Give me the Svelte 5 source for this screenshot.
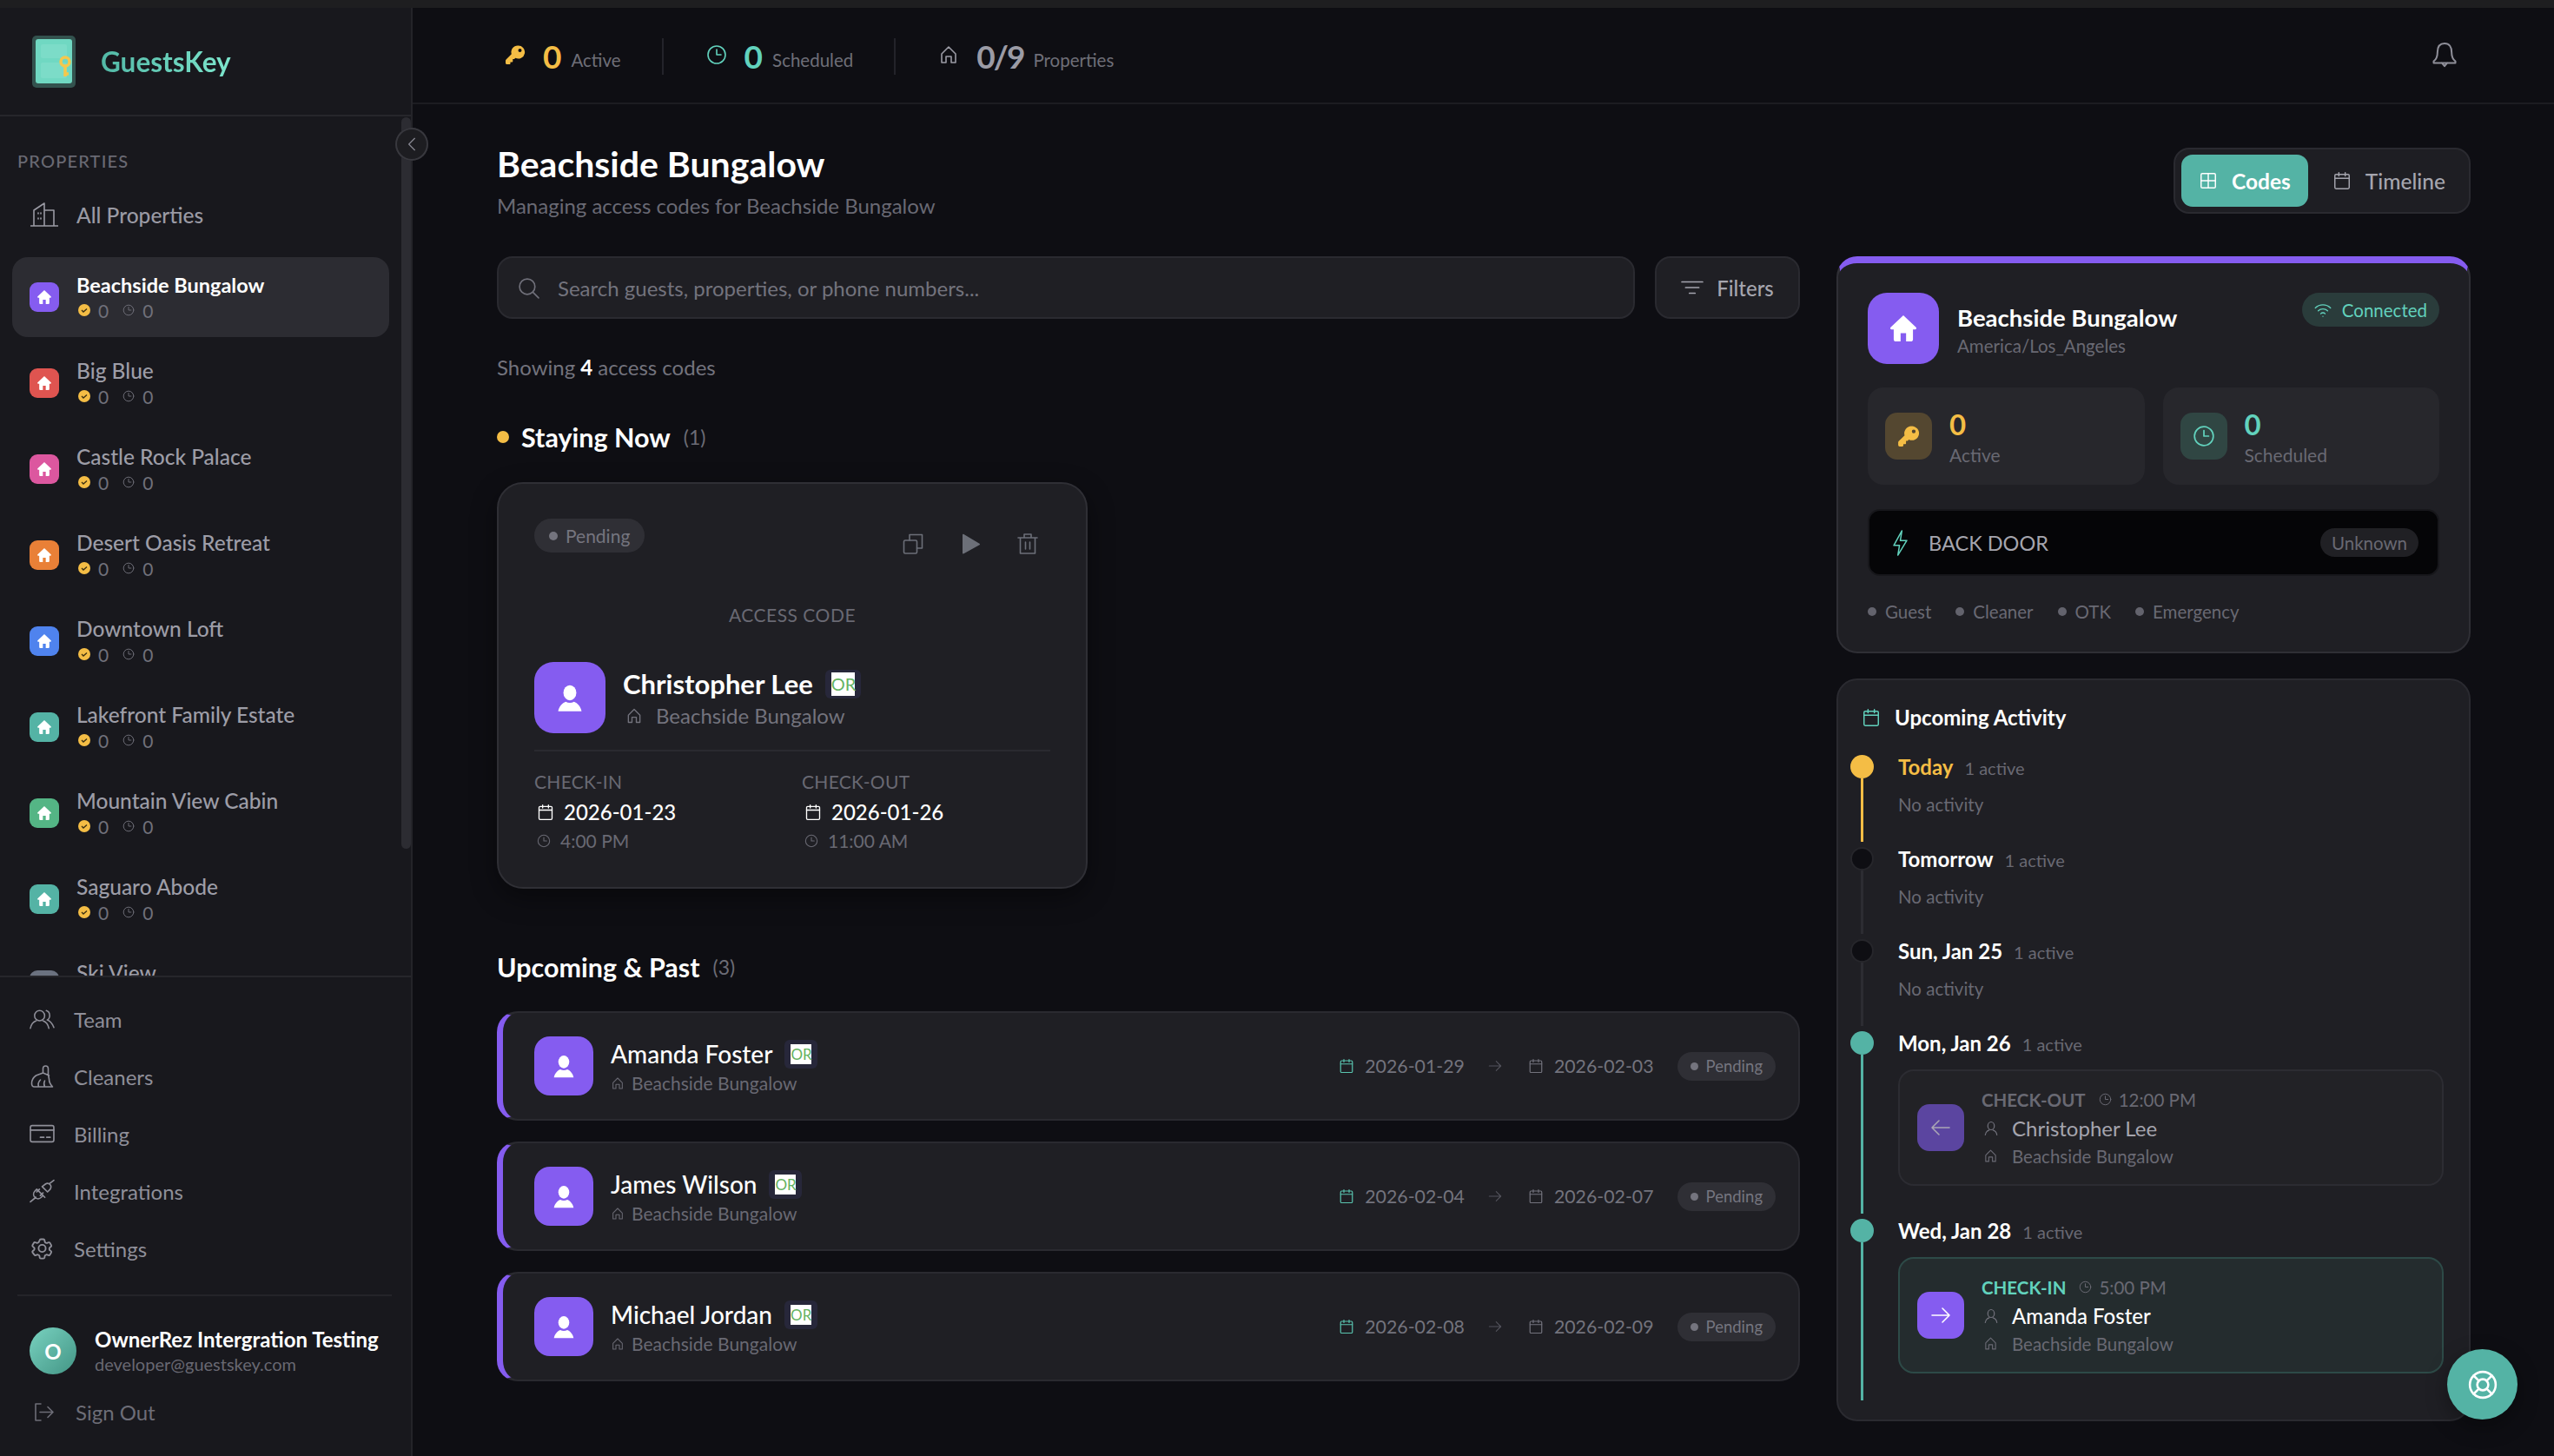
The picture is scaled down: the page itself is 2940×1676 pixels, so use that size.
<script>
  const properties = [
    { name: "Beachside Bungalow", color: "#855cf0", active: true },
    { name: "Big Blue", color: "#df5450" },
    { name: "Castle Rock Palace", color: "#dc579f" },
    { name: "Desert Oasis Retreat", color: "#e98037" },
    { name: "Downtown Loft", color: "#4f83ee" },
    { name: "Lakefront Family Estate", color: "#54b3a5" },
    { name: "Mountain View Cabin", color: "#54b585" },
    { name: "Saguaro Abode", color: "#54b3a5" },
    { name: "Ski View", color: "#6b7280" }
  ];

  const upcoming = [
    { name: "Amanda Foster", from: "2026-01-29", to: "2026-02-03" },
    { name: "James Wilson", from: "2026-02-04", to: "2026-02-07" },
    { name: "Michael Jordan", from: "2026-02-08", to: "2026-02-09" }
  ];

  const emptyDays = [
    { label: "Today", kind: "today" },
    { label: "Tomorrow", kind: "idle" },
    { label: "Sun, Jan 25", kind: "idle" }
  ];

  const legend = ["Guest", "Cleaner", "OTK", "Emergency"];
</script>

{#snippet house()}
  <svg viewBox="0 0 24 24" class="line"><path d="M4 11l8-8 8 8v10h-5v-7H9v7H4z" /></svg>
{/snippet}
{#snippet houseFill()}
  <svg viewBox="0 0 24 24" class="solid"><path d="M12 2.500 2.800 11.200c-.6.600-.2 1.600.6 1.600H5v7.200c0 .8.700 1.500 1.500 1.500H10v-6h4v6h3.500c.8 0 1.500-.7 1.500-1.500v-7.200h1.600c.8 0 1.200-1 .6-1.600z" /></svg>
{/snippet}
{#snippet clock()}
  <svg viewBox="0 0 24 24" class="line"><circle cx="12" cy="12" r="10" /><path d="M12 6v6h5" /></svg>
{/snippet}
{#snippet calendar()}
  <svg viewBox="0 0 24 24" class="line"><rect x="3" y="4" width="18" height="18" rx="1.500" /><path d="M3 9h18M8 2v4M16 2v4" /></svg>
{/snippet}
{#snippet key()}
  <svg viewBox="0 0 24 24" class="solid"><path d="M15 1.500a7.500 7.500 0 0 0-7.200 9.700L1.600 17.400c-.4.400-.6.900-.6 1.400v2.700c0 .8.700 1.500 1.500 1.500h3c.6 0 1-.4 1-1v-1.500h1.800c.6 0 1-.4 1-1V17h1.700l1.300-1.300A7.500 7.500 0 1 0 15 1.500zm2.500 7.500a2 2 0 1 1 0-4 2 2 0 0 1 0 4z" /></svg>
{/snippet}
{#snippet person()}
  <svg viewBox="0 0 24 24" class="solid"><ellipse cx="12" cy="8.500" rx="4.700" ry="5.500" /><path d="M3.500 22c.6-3.500 3-6 5.500-7 1.800 1 4.200 1 6 0 2.500 1 4.900 3.500 5.500 7z" /></svg>
{/snippet}
{#snippet personLine()}
  <svg viewBox="0 0 24 24" class="line"><ellipse cx="12" cy="8" rx="5" ry="6" /><path d="M3 22c.6-4 3-6.500 6-7.500M21 22c-.6-4-3-6.500-6-7.500" /></svg>
{/snippet}
{#snippet orBadge()}
  <span class="or-wrap"><span class="or">OR</span></span>
{/snippet}
{#snippet pending()}
  <span class="pill"><i></i>Pending</span>
{/snippet}

<div class="strip"></div>
<div class="shell">
  <aside class="sidebar">
    <div class="brand">
      <svg class="logo" viewBox="0 0 50 60">
        <rect width="50" height="60" rx="5" fill="#33524e" />
        <rect x="4" y="4" width="42" height="51" rx="3" fill="#70d8c2" />
        <rect x="10" y="10" width="30" height="16" rx="2" fill="#7cdcc8" />
        <rect x="10" y="31" width="30" height="18" rx="2" fill="#7cdcc8" />
        <circle cx="38" cy="30" r="5" fill="none" stroke="#f5c84c" stroke-width="3.500" />
        <path d="M38 35v12M38 44h4" stroke="#f5c84c" stroke-width="3.500" fill="none" />
      </svg>
      <span class="brand-name">GuestsKey</span>
    </div>

    <div class="list">
      <div class="section-label">PROPERTIES</div>
      <div class="all-row">
        <svg viewBox="0 0 32 28" class="line all-icon"><path d="M0 27h32M4 27V9l12-8v26M16 9h11v18M9 12v1M12 12v1M9 18v1M12 18v1" /></svg>
        All Properties
      </div>
      {#each properties as p}
        <div class="prop" class:selected={p.active}>
          <span class="prop-icon" style="background: {p.color};">{@render houseFill()}</span>
          <div class="prop-text">
            <div class="prop-name">{p.name}</div>
            <div class="prop-stats">
              <svg viewBox="0 0 14 14" class="check"><circle cx="7" cy="7" r="7" fill="#f4bd45" /><path d="M4 7l2 2 4-3.500" fill="none" stroke="#3a2f12" stroke-width="1.300" /></svg>
              <span class="stat-num">0</span>
              <span class="mini-clock">{@render clock()}</span>
              <span class="stat-num">0</span>
            </div>
          </div>
        </div>
      {/each}
      <div class="scroll-thumb"></div>
    </div>

    <nav class="nav">
      <div class="nav-row">
        <svg viewBox="0 0 30 24" class="line"><circle cx="12" cy="8" r="6" /><path d="M1 23c1-5 4-8 7-9M23 23c-1-5-4-8-7-9M20 2c3 1 4 3 4 6s-2 5-3 5c3 1 6 4 8 9" /></svg>
        Team
      </div>
      <div class="nav-row">
        <svg viewBox="0 0 28 28" class="line"><path d="M18 2c-2 0-3 1-3 3v5L7 13c-3 2-5 5-5 9 0 3 1 4 3 4h21c-2-2-4-6-4-9l-1-5V5c0-2-1-3-3-3zM15 10l7 3M10 26c-1-3 0-6 2-8M17 26c-1-2-1-5 0-7" /></svg>
        Cleaners
      </div>
      <div class="nav-row">
        <svg viewBox="0 0 28 20" class="line"><rect x="1" y="1" width="26" height="18" rx="2" /><path d="M1 6h26M12 14h4M19 14h4" /></svg>
        Billing
      </div>
      <div class="nav-row">
        <svg viewBox="0 0 28 26" class="line"><path d="M1 25l6-5M27 1l-5 4M8 11l9 9M6 13c-2 2-2 5 0 7s5 2 7 0l2-2-7-7zM14 8l6 6 3-3c1-2 1-4 0-5s-3-2-5-1zM11 11l-3 3M15 15l-3 3" /></svg>
        Integrations
      </div>
      <div class="nav-row">
        <svg viewBox="0 0 24 24" class="line"><path d="M9.600 3.900c.1-.5.600-.9 1.100-.9h2.600c.5 0 1 .4 1.100.9l.2 1.500c.1.400.4.700.7.900l.5.300c.3.200.8.200 1.100.1l1.400-.5c.5-.2 1.100 0 1.400.5l1.300 2.200c.3.500.1 1-.3 1.400l-1.100.9c-.3.200-.5.600-.5 1v.6c0 .4.200.8.500 1l1.100.9c.4.400.6.900.3 1.400l-1.300 2.200c-.3.500-.9.700-1.400.5l-1.400-.5c-.3-.1-.8-.1-1.100.1l-.5.300c-.3.200-.6.500-.7.900l-.2 1.500c-.1.500-.6.900-1.100.9h-2.600c-.5 0-1-.4-1.100-.9l-.2-1.500c-.1-.4-.4-.7-.7-.9l-.5-.3c-.3-.2-.8-.2-1.100-.1l-1.400.5c-.5.200-1.100 0-1.400-.5L2.500 16c-.3-.5-.1-1 .3-1.400l1.100-.9c.3-.2.500-.6.500-1v-.6c0-.4-.2-.8-.5-1l-1.100-.9c-.4-.4-.6-.9-.3-1.400l1.300-2.200c.3-.5.900-.7 1.400-.5l1.400.5c.3.100.8.100 1.100-.1l.5-.3c.3-.2.600-.5.700-.9z" /><circle cx="12" cy="12" r="3.500" /></svg>
        Settings
      </div>
    </nav>

    <div class="account">
      <div class="user">
        <span class="user-avatar">O</span>
        <div>
          <div class="user-name">OwnerRez Intergration Testing</div>
          <div class="user-mail">developer@guestskey.com</div>
        </div>
      </div>
      <div class="nav-row signout">
        <svg viewBox="0 0 24 24" class="line"><path d="M9 3H3v19h6M8 12.500h15M17 6.500l6 6-6 6" /></svg>
        Sign Out
      </div>
    </div>

    <button class="collapse" aria-label="Collapse">
      <svg viewBox="0 0 24 24" class="line"><path d="M16 4l-8 8 8 8" /></svg>
    </button>
  </aside>

  <div class="main">
    <header class="topbar">
      <div class="top-stat first">
        <span class="top-icon amber">{@render key()}</span>
        <b class="amber">0</b><span>Active</span>
      </div>
      <div class="top-stat">
        <span class="top-icon teal">{@render clock()}</span>
        <b class="teal">0</b><span>Scheduled</span>
      </div>
      <div class="top-stat last">
        <span class="top-icon grey">{@render house()}</span>
        <b class="grey">0/9</b><span>Properties</span>
      </div>
      <svg viewBox="0 0 24 24" class="line bell"><path d="M12 1.500c-4.500 0-6.500 3.500-6.500 8 0 5-1.500 7-3.500 8.500v1.500h20V18c-2-1.500-3.500-3.500-3.500-8.500 0-4.500-2-8-6.500-8zM9.500 19.500l2.500 3 2.500-3" /></svg>
    </header>

    <div class="body">
      <div class="page-head">
        <div>
          <h1>Beachside Bungalow</h1>
          <p>Managing access codes for Beachside Bungalow</p>
        </div>
        <div class="segment">
          <span class="seg on">
            <svg viewBox="0 0 24 24" class="line"><rect x="3" y="3" width="18" height="18" rx="1.500" /><path d="M12 3v18M3 12h18" /></svg>
            Codes
          </span>
          <span class="seg">{@render calendar()}Timeline</span>
        </div>
      </div>

      <div class="columns">
        <section class="left">
          <div class="search-row">
            <div class="search">
              <svg viewBox="0 0 24 24" class="line"><circle cx="10.500" cy="10.500" r="8.500" /><path d="M17 17l6 6" /></svg>
              Search guests, properties, or phone numbers...
            </div>
            <div class="filters">
              <svg viewBox="0 0 24 24" class="line"><path d="M1 6h22M5 12h14M9 18h6" /></svg>
              Filters
            </div>
          </div>

          <div class="showing">Showing <b>4</b> access codes</div>

          <div class="group-title staying"><i></i><h2>Staying Now</h2><span>(1)</span></div>

          <article class="stay-card">
            <div class="stay-top">
              {@render pending()}
              <div class="actions">
                <svg viewBox="0 0 24 24" class="line"><rect x="1.500" y="8" width="15" height="15" rx="1.500" /><path d="M8 8V1.500h14.500V17H16.500" /></svg>
                <svg viewBox="0 0 24 24" class="solid"><path d="M3 1.500v21c0 .8.800 1.200 1.500.8l18-10c.7-.4.7-1.200 0-1.600l-18-10.800C3.800.5 3 .8 3 1.500z" /></svg>
                <svg viewBox="0 0 24 24" class="line"><path d="M1 5h22M8 5V1h8v4M3.500 5v18h17V5M9.500 10v8M14.500 10v8" /></svg>
              </div>
            </div>
            <div class="access-label">ACCESS CODE</div>
            <div class="guest-big">
              <span class="avatar big">{@render person()}</span>
              <div>
                <div class="guest-name-big">Christopher Lee {@render orBadge()}</div>
                <div class="guest-prop-big">{@render house()}Beachside Bungalow</div>
              </div>
            </div>
            <div class="stay-dates">
              <div>
                <div class="date-label">CHECK-IN</div>
                <div class="date-val">{@render calendar()}2026-01-23</div>
                <div class="date-time">{@render clock()}4:00 PM</div>
              </div>
              <div>
                <div class="date-label">CHECK-OUT</div>
                <div class="date-val">{@render calendar()}2026-01-26</div>
                <div class="date-time">{@render clock()}11:00 AM</div>
              </div>
            </div>
          </article>

          <div class="group-title past"><h2>Upcoming &amp; Past</h2><span>(3)</span></div>

          <div class="rows">
            {#each upcoming as g}
              <article class="row">
                <span class="avatar">{@render person()}</span>
                <div class="row-main">
                  <div class="row-name">{g.name} {@render orBadge()}</div>
                  <div class="row-prop">{@render house()}Beachside Bungalow</div>
                </div>
                <div class="row-dates">
                  <span class="row-date in">{@render calendar()}<em>{g.from}</em></span>
                  <svg viewBox="0 0 24 24" class="line arrow"><path d="M2 12h20M14 4l8 8-8 8" /></svg>
                  <span class="row-date">{@render calendar()}<em>{g.to}</em></span>
                </div>
                {@render pending()}
              </article>
            {/each}
          </div>
        </section>

        <section class="right">
          <article class="prop-card">
            <div class="prop-head">
              <span class="avatar big home">{@render houseFill()}</span>
              <div class="prop-head-text">
                <div class="prop-title">Beachside Bungalow</div>
                <div class="prop-tz">America/Los_Angeles</div>
              </div>
              <span class="connected">
                <svg viewBox="0 0 24 24" class="line"><path d="M1.500 9a15 15 0 0 1 21 0M5.500 13a9.500 9.500 0 0 1 13 0M9 17a4 4 0 0 1 6 0M12 20.500v.1" /></svg>
                Connected
              </span>
            </div>
            <div class="stat-boxes">
              <div class="stat-box">
                <span class="stat-icon amber-bg amber">{@render key()}</span>
                <div class="stat-copy"><div class="stat-big amber">0</div><div class="stat-label">Active</div></div>
              </div>
              <div class="stat-box">
                <span class="stat-icon teal-bg teal">{@render clock()}</span>
                <div class="stat-copy"><div class="stat-big teal">0</div><div class="stat-label">Scheduled</div></div>
              </div>
            </div>
            <div class="door">
              <svg viewBox="0 0 20 32" class="line bolt"><path d="M12 1 2 19h7l-2 12 11-18h-8z" /></svg>
              <span class="door-name">BACK DOOR</span>
              <span class="unknown">Unknown</span>
            </div>
            <div class="legend">
              {#each legend as item}
                <span class="legend-item"><i></i>{item}</span>
              {/each}
            </div>
          </article>

          <article class="activity">
            <div class="activity-title"><span class="teal">{@render calendar()}</span>Upcoming Activity</div>

            {#each emptyDays as day}
              <div class="day {day.kind}">
                <div class="rail"><i></i><u></u></div>
                <div class="day-body">
                  <div class="day-head"><b>{day.label}</b><span>1 active</span></div>
                  <div class="no-activity">No activity</div>
                </div>
              </div>
            {/each}

            <div class="day busy">
              <div class="rail"><i></i><u></u></div>
              <div class="day-body">
                <div class="day-head"><b>Mon, Jan 26</b><span>1 active</span></div>
                <div class="event">
                  <span class="event-icon dim">
                    <svg viewBox="0 0 24 24" class="line"><path d="M22 12H2M10 4l-8 8 8 8" /></svg>
                  </span>
                  <div>
                    <div class="event-top"><b>CHECK-OUT</b>{@render clock()}<span>12:00 PM</span></div>
                    <div class="event-guest dim-text">{@render personLine()}Christopher Lee</div>
                    <div class="event-prop">{@render house()}Beachside Bungalow</div>
                  </div>
                </div>
              </div>
            </div>

            <div class="day busy">
              <div class="rail"><i></i><u></u></div>
              <div class="day-body">
                <div class="day-head"><b>Wed, Jan 28</b><span>1 active</span></div>
                <div class="event current">
                  <span class="event-icon">
                    <svg viewBox="0 0 24 24" class="line"><path d="M2 12h20M14 4l8 8-8 8" /></svg>
                  </span>
                  <div>
                    <div class="event-top"><b>CHECK-IN</b>{@render clock()}<span>5:00 PM</span></div>
                    <div class="event-guest">{@render personLine()}Amanda Foster</div>
                    <div class="event-prop">{@render house()}Beachside Bungalow</div>
                  </div>
                </div>
              </div>
            </div>
          </article>
        </section>
      </div>
    </div>
  </div>
</div>

<button class="fab" aria-label="Help">
  <svg viewBox="0 0 24 24" class="line"><circle cx="12" cy="12" r="10.500" /><circle cx="12" cy="12" r="4.500" /><path d="M4.600 4.600l4.200 4.200M15.200 15.200l4.200 4.200M19.400 4.600l-4.200 4.200M8.800 15.200l-4.200 4.200" /></svg>
</button>

<style>
  :global(body) {
    margin: 0;
    background: #0e0e13;
    overflow: hidden;
    font-family: "Lato", "Noto Sans", sans-serif;
    color: #fff;
  }

  svg { display: block; flex: none; }
  .line { fill: none; stroke: currentColor; stroke-width: 1.6; stroke-linecap: round; stroke-linejoin: round; }
  .solid { fill: currentColor; }
  h1, h2, p { margin: 0; }
  button { border: 0; padding: 0; }

  .amber { color: #f4bd45; }
  .teal { color: #62d2bd; }
  .grey { color: #9b9ba5; }

  .strip { height: 9px; background: #1e1e20; }
  .shell { display: flex; height: 1667px; }

  /* Sidebar */
  .sidebar {
    position: relative;
    width: 475px;
    flex: none;
    display: flex;
    flex-direction: column;
    background: #18181d;
    border-right: 2px solid #242429;
    box-sizing: border-box;
  }
  .brand {
    height: 125px;
    flex: none;
    box-sizing: border-box;
    display: flex;
    align-items: center;
    padding-left: 37px;
    gap: 29px;
    border-bottom: 2px solid #26262b;
  }
  .logo { width: 50px; height: 60px; }
  .brand-name {
    font-size: 31.500px;
    font-weight: 700;
    background: linear-gradient(90deg, #52b8a6, #7de6cd);
    -webkit-background-clip: text;
    background-clip: text;
    color: transparent;
  }

  .list { position: relative; height: 989px; flex: none; overflow: hidden; }
  .scroll-thumb {
    position: absolute;
    right: 0;
    top: 1px;
    width: 11px;
    height: 842px;
    border-radius: 6px;
    background: #2c2c32;
  }
  .section-label {
    padding: 39px 0 0 20px;
    font-size: 20px;
    line-height: 24px;
    letter-spacing: 1.200px;
    font-weight: 500;
    color: #696973;
  }
  .all-row {
    display: flex;
    align-items: center;
    gap: 21px;
    height: 46px;
    margin: 27px 0 26px;
    padding-left: 35px;
    font-size: 24.500px;
    font-weight: 500;
    color: #9a9aa4;
  }
  .all-icon { width: 32px; height: 28px; }
  .prop {
    display: flex;
    align-items: center;
    gap: 20px;
    width: 414px;
    height: 92px;
    margin: 0 0 7px 14px;
    padding-left: 20px;
    border-radius: 18px;
  }
  .prop.selected { background: #2c2c32; }
  .prop-icon {
    display: flex;
    align-items: center;
    justify-content: center;
    width: 34px;
    height: 34px;
    border-radius: 9px;
    color: #fff;
  }
  .prop-icon svg { width: 20px; height: 20px; }
  .prop-name { font-size: 24.500px; line-height: 30px; font-weight: 500; color: #9d9da7; }
  .selected .prop-name { color: #fff; font-weight: 700; font-size: 23.500px; }
  .prop-stats { display: flex; align-items: center; height: 28px; color: #70707a; font-size: 21px; }
  .check { width: 14px; height: 14px; margin-left: 2px; }
  .stat-num { margin-left: 9px; }
  .mini-clock { margin-left: 16px; width: 14px; height: 14px; }
  .mini-clock svg { width: 14px; height: 14px; }

  .nav {
    flex: none;
    border-top: 2px solid #26262b;
    padding: 15px 0 20px;
  }
  .nav-row {
    display: flex;
    align-items: center;
    gap: 22px;
    height: 66px;
    padding-left: 34px;
    font-size: 24px;
    color: #8f8f99;
  }
  .nav-row svg { width: 29px; height: 28px; }
  .account { margin: 0 22px 0 20px; border-top: 2px solid #242429; }
  .user { display: flex; align-items: center; gap: 21px; padding: 35px 0 0 14px; }
  .user-avatar {
    display: flex;
    align-items: center;
    justify-content: center;
    width: 54px;
    height: 54px;
    border-radius: 50%;
    background: linear-gradient(135deg, #79d2c0, #439585);
    font-size: 24px;
    font-weight: 700;
  }
  .user-name { font-size: 24px; line-height: 30px; font-weight: 700; white-space: nowrap; }
  .user-mail { font-size: 20px; line-height: 26px; color: #686872; }
  .signout { margin-left: -20px; height: 60px; margin-top: 12px; color: #6d6d77; }
  .signout svg { width: 24px; height: 24px; margin-left: 4px; margin-right: 3px; }

  .collapse {
    position: absolute;
    left: 455px;
    top: 138px;
    width: 38px;
    height: 38px;
    display: flex;
    align-items: center;
    justify-content: center;
    border-radius: 50%;
    background: #1d1d21;
    box-shadow: inset 0 0 0 2px #38383e;
    color: #85858f;
  }
  .collapse svg { width: 20px; height: 20px; }

  /* Top bar */
  .main { flex: 1; min-width: 0; }
  .topbar {
    height: 111px;
    box-sizing: border-box;
    display: flex;
    align-items: center;
    border-bottom: 2px solid #1c1c21;
    padding: 2px 111px 0 0;
  }
  .top-stat {
    display: flex;
    align-items: center;
    height: 42px;
    padding: 0 47px 0 49px;
    border-right: 2px solid #23232a;
    font-size: 20.500px;
    color: #6e6e78;
  }
  .top-stat.first { padding: 0 47px 0 106px; }
  .top-stat.last { border: 0; }
  .top-stat b { font-size: 37px; font-weight: 700; margin-right: 11px; line-height: 42px; }
  .top-stat.last b { letter-spacing: -2px; }
  .top-stat span:last-child { padding-top: 8px; }
  .top-icon { width: 24px; height: 24px; margin-right: 20px; margin-top: -4px; }
  .top-icon svg { width: 24px; height: 24px; }
  .bell { margin-left: auto; width: 30px; height: 30px; color: #8f8f99; margin-top: -4px; }

  /* Main body */
  .body { padding: 50px 0 0 97px; width: 2369px; box-sizing: border-box; }
  .page-head { display: flex; justify-content: space-between; height: 125px; }
  h1 { font-size: 41px; line-height: 50px; font-weight: 700; margin-top: -6px; }
  .page-head p { font-size: 24px; line-height: 30px; color: #696973; margin-top: 8px; }
  .segment {
    display: flex;
    align-items: center;
    gap: 8px;
    height: 76px;
    padding: 0 7px;
    box-sizing: border-box;
    border: 2px solid #2a2a30;
    border-radius: 18px;
    background: #1e1e23;
  }
  .seg {
    display: flex;
    align-items: center;
    justify-content: center;
    gap: 16px;
    height: 60px;
    padding: 0 20px;
    border-radius: 13px;
    font-size: 24.500px;
    font-weight: 500;
    color: #a5a5ae;
  }
  .seg svg { width: 22px; height: 22px; }
  .seg.on { background: #54b3a5; color: #fff; font-weight: 700; }

  .columns { display: flex; gap: 42px; }
  .left { width: 1500px; flex: none; }
  .right { width: 730px; flex: none; display: flex; flex-direction: column; gap: 29px; }

  .search-row { display: flex; gap: 23px; }
  .search {
    flex: 1;
    display: flex;
    align-items: center;
    gap: 21px;
    height: 72px;
    box-sizing: border-box;
    padding-left: 22px;
    background: #1f1f24;
    border: 2px solid #2a2a30;
    border-radius: 18px;
    font-size: 24px;
    color: #73737d;
  }
  .search svg { width: 25px; height: 25px; color: #70707a; }
  .filters {
    display: flex;
    align-items: center;
    justify-content: center;
    gap: 15px;
    width: 167px;
    height: 72px;
    box-sizing: border-box;
    background: #1f1f24;
    border: 2px solid #2a2a30;
    border-radius: 18px;
    font-size: 24px;
    font-weight: 500;
    color: #a5a5ae;
  }
  .filters svg { width: 26px; height: 26px; }

  .showing { margin-top: 41px; font-size: 24px; line-height: 30px; color: #73737d; }
  .showing b { color: #fff; }

  .group-title { display: flex; align-items: center; }
  .group-title h2 { font-size: 30.500px; font-weight: 700; line-height: 40px; }
  .group-title span { font-size: 23px; color: #6c6c76; margin-left: 15px; }
  .staying { margin-top: 45px; }
  .staying i { width: 14px; height: 14px; border-radius: 50%; background: #f4bd45; margin-right: 14px; }
  .past { margin-top: 70px; }

  .stay-card {
    width: 680px;
    height: 468px;
    margin-top: 32px;
    padding: 40px 41px 0;
    box-sizing: border-box;
    background: #1f1f24;
    border: 2px solid #2f2f35;
    border-radius: 30px;
    box-shadow: 0 10px 30px rgba(0, 0, 0, 0.4);
  }
  .stay-top { display: flex; justify-content: space-between; height: 98px; }
  .pill {
    display: inline-flex;
    align-items: center;
    gap: 9px;
    height: 39px;
    padding: 0 17px;
    box-sizing: border-box;
    border-radius: 20px;
    background: #2f2f35;
    font-size: 21px;
    color: #75757f;
  }
  .pill i { width: 10px; height: 10px; border-radius: 50%; background: #74747e; }
  .actions { display: flex; gap: 42px; margin: 17px 14px 0 0; color: #6c6f78; align-self: flex-start; }
  .actions svg { width: 24px; height: 24px; }
  .access-label { text-align: center; font-size: 21px; line-height: 26px; letter-spacing: 0.500px; color: #696973; }
  .guest-big { display: flex; gap: 20px; margin-top: 41px; }
  .avatar {
    display: flex;
    align-items: center;
    justify-content: center;
    width: 68px;
    height: 68px;
    flex: none;
    border-radius: 18px;
    background: #855cf0;
    color: #fff;
  }
  .avatar svg { width: 32px; height: 32px; }
  .avatar.big { width: 82px; height: 82px; border-radius: 22px; }
  .avatar.big svg { width: 38px; height: 38px; }
  .guest-name-big { display: flex; align-items: center; gap: 14px; font-size: 31px; line-height: 40px; font-weight: 700; margin-top: 5px; }
  .or-wrap {
    display: inline-flex;
    align-items: center;
    justify-content: center;
    padding: 3px 7px;
    border-radius: 6px;
    background: #27273a;
  }
  .or {
    display: block;
    width: 27px;
    height: 27px;
    background: #fff;
    color: #65b362;
    font-size: 20px;
    font-weight: 400;
    line-height: 27px;
    text-align: center;
  }
  .row .or { width: 24px; height: 23px; font-size: 17px; line-height: 23px; }
  .row .or-wrap { padding: 5px 7px; }
  .guest-prop-big { display: flex; align-items: center; gap: 15px; font-size: 24px; line-height: 34px; color: #73737d; padding-left: 3px; }
  .guest-prop-big svg { width: 20px; height: 20px; }
  .stay-dates {
    display: grid;
    grid-template-columns: 308px 1fr;
    margin-top: 19px;
    padding-top: 18px;
    border-top: 2px solid #2a2a30;
  }
  .date-label { font-size: 21px; line-height: 33px; color: #696973; letter-spacing: 0.300px; }
  .date-val { display: flex; align-items: center; gap: 11px; font-size: 24px; line-height: 38px; font-weight: 500; padding-left: 3px; }
  .date-val svg { width: 20px; height: 24px; }
  .date-time { display: flex; align-items: center; gap: 11px; font-size: 21px; line-height: 28px; color: #696973; padding-left: 3px; }
  .date-time svg { width: 16px; height: 16px; }

  .rows { margin-top: 31px; display: flex; flex-direction: column; gap: 24px; }
  .row {
    display: flex;
    align-items: center;
    height: 126px;
    box-sizing: border-box;
    padding: 0 26px 0 36px;
    background: #1f1f24;
    border: 2px solid #2a2a30;
    border-left: 7px solid #855cf0;
    border-radius: 24px;
  }
  .row-main { margin-left: 20px; flex: 1; padding-top: 2px; }
  .row-name { display: flex; align-items: center; gap: 14px; font-size: 28px; line-height: 36px; font-weight: 500; }
  .row-prop { display: flex; align-items: center; gap: 8px; font-size: 21px; line-height: 28px; color: #696973; margin-top: 2px; }
  .row-prop svg { width: 16px; height: 16px; }
  .row-dates { display: flex; align-items: center; margin-right: 27px; font-size: 21.300px; color: #73737d; }
  .row-date { display: flex; align-items: center; gap: 12px; }
  .row-date em { font-style: normal; }
  .row-date svg { width: 18px; height: 20px; color: #73737d; }
  .row-date.in svg { color: #5ac4af; }
  .arrow { width: 16px; height: 16px; margin: 0 30px 0 27px; color: #53535c; }
  .row .pill { height: 33px; font-size: 18.500px; padding: 0 15px; }
  .row .pill i { width: 9px; height: 9px; }

  /* Property card */
  .prop-card {
    height: 457px;
    box-sizing: border-box;
    padding: 34px 34px 0;
    background: #1f1f24;
    border: 2px solid #2f2f35;
    border-top: 8px solid #855cf0;
    border-radius: 24px;
  }
  .prop-head { display: flex; align-items: flex-start; }
  .home svg { width: 40px; height: 40px; }
  .prop-head-text { margin-left: 21px; flex: 1; padding-top: 11px; }
  .prop-title { font-size: 27.500px; line-height: 36px; font-weight: 700; }
  .prop-tz { font-size: 20.500px; line-height: 28px; color: #696973; }
  .connected {
    display: flex;
    align-items: center;
    gap: 12px;
    height: 39px;
    padding: 0 14px;
    border-radius: 20px;
    background: #2a3c3b;
    font-size: 20.500px;
    color: #62d2bd;
  }
  .connected svg { width: 20px; height: 20px; }
  .stat-boxes { display: grid; grid-template-columns: 1fr 1fr; gap: 21px; margin-top: 27px; }
  .stat-box { display: flex; align-items: center; gap: 20px; height: 112px; padding-left: 20px; background: #27272c; border-radius: 18px; }
  .stat-copy { padding-top: 6px; }
  .stat-icon { display: flex; align-items: center; justify-content: center; width: 54px; height: 54px; border-radius: 14px; }
  .stat-icon svg { width: 26px; height: 26px; }
  .amber-bg { background: #544730; }
  .teal-bg { background: #304643; }
  .stat-big { font-size: 33px; line-height: 38px; font-weight: 700; }
  .stat-label { font-size: 21px; line-height: 34px; color: #696973; }
  .door {
    display: flex;
    align-items: center;
    height: 77px;
    margin-top: 28px;
    padding: 0 22px 0 26px;
    box-sizing: border-box;
    background: #050507;
    border: 2px solid #17171b;
    border-radius: 14px;
  }
  .bolt { width: 19px; height: 30px; color: #62d2bd; }
  .door-name { margin-left: 23px; flex: 1; font-size: 23.500px; color: #a5a5ae; }
  .unknown { display: flex; align-items: center; height: 33px; padding: 0 13px; border-radius: 17px; background: #202024; font-size: 20.500px; color: #696973; }
  .legend { display: flex; gap: 28px; margin-top: 29px; }
  .legend-item { display: flex; align-items: center; gap: 10px; font-size: 20.500px; color: #696973; }
  .legend-item i { width: 10px; height: 10px; border-radius: 50%; background: #63636d; }

  /* Timeline */
  .activity {
    height: 855px;
    box-sizing: border-box;
    padding: 31px 29px 0 14px;
    background: #1f1f24;
    border: 2px solid #2a2a30;
    border-radius: 24px;
  }
  .activity-title {
    display: flex;
    align-items: center;
    gap: 16px;
    padding-left: 13px;
    font-size: 24px;
    line-height: 24px;
    font-weight: 700;
    height: 24px;
    margin-bottom: 31px;
  }
  .activity-title span { width: 22px; height: 22px; }
  .activity-title svg { width: 22px; height: 22px; }
  .day { display: flex; height: 106px; }
  .day.busy { height: 216px; }
  .day.busy:last-child { height: 215px; }
  .rail { position: relative; width: 27px; flex: none; display: flex; flex-direction: column; align-items: center; }
  .rail i {
    width: 27px;
    height: 27px;
    box-sizing: border-box;
    border-radius: 50%;
    background: #0e0e13;
    border: 2px solid #26262b;
  }
  .rail u { display: block; width: 3px; flex: 1; margin-bottom: 6px; background: #2c2c32; }
  .today .rail i { background: #f4bd45; border: 0; }
  .today .rail u { background: #f4bd45; }
  .busy .rail i { background: #54b3a5; border: 0; }
  .busy .rail u { background: #54b3a5; }
  .day-body { flex: 1; margin-left: 28px; }
  .day-head { display: flex; align-items: baseline; gap: 13px; height: 30px; line-height: 30px; margin-top: -1px; }
  .day-head b { font-size: 24px; font-weight: 700; }
  .day-head span { font-size: 20px; color: #696973; }
  .today .day-head b { color: #f4bd45; }
  .no-activity { margin-top: 15px; font-size: 20.500px; line-height: 26px; color: #696973; }
  .event {
    display: flex;
    align-items: center;
    gap: 20px;
    height: 134px;
    margin-top: 15px;
    padding-left: 20px;
    box-sizing: border-box;
    background: #222226;
    border: 2px solid #2c2c32;
    border-radius: 18px;
  }
  .event.current { background: #242c2e; border-color: #2d4a47; }
  .event-icon {
    display: flex;
    align-items: center;
    justify-content: center;
    width: 54px;
    height: 54px;
    flex: none;
    border-radius: 14px;
    background: #855cf0;
    color: #fff;
  }
  .event-icon svg { width: 24px; height: 24px; }
  .event-icon.dim { background: #5b45a0; color: #aaa7b5; }
  .event-top { display: flex; align-items: center; gap: 8px; font-size: 20.500px; height: 28px; color: #696973; }
  .event-top b { font-weight: 700; margin-right: 7px; }
  .current .event-top b { color: #62d2bd; }
  .event-top svg { width: 15px; height: 15px; }
  .event-guest { display: flex; align-items: center; gap: 15px; font-size: 24px; height: 36px; font-weight: 500; margin-top: 1px; }
  .dim-text { color: #a5a5ae; font-weight: 400; }
  .event-guest svg { width: 18px; height: 20px; color: #73737d; margin-left: 2px; }
  .event-prop { display: flex; align-items: center; gap: 16px; font-size: 20.500px; height: 28px; color: #696973; }
  .event-prop svg { width: 17px; height: 17px; margin-left: 2px; }

  .fab {
    position: fixed;
    left: 2817px;
    top: 1553px;
    width: 81px;
    height: 81px;
    display: flex;
    align-items: center;
    justify-content: center;
    border-radius: 50%;
    background: #54b3a5;
    color: #fff;
    box-shadow: 0 8px 24px rgba(0, 0, 0, 0.35);
  }
  .fab svg { width: 34px; height: 34px; stroke-width: 1.800; }
</style>
